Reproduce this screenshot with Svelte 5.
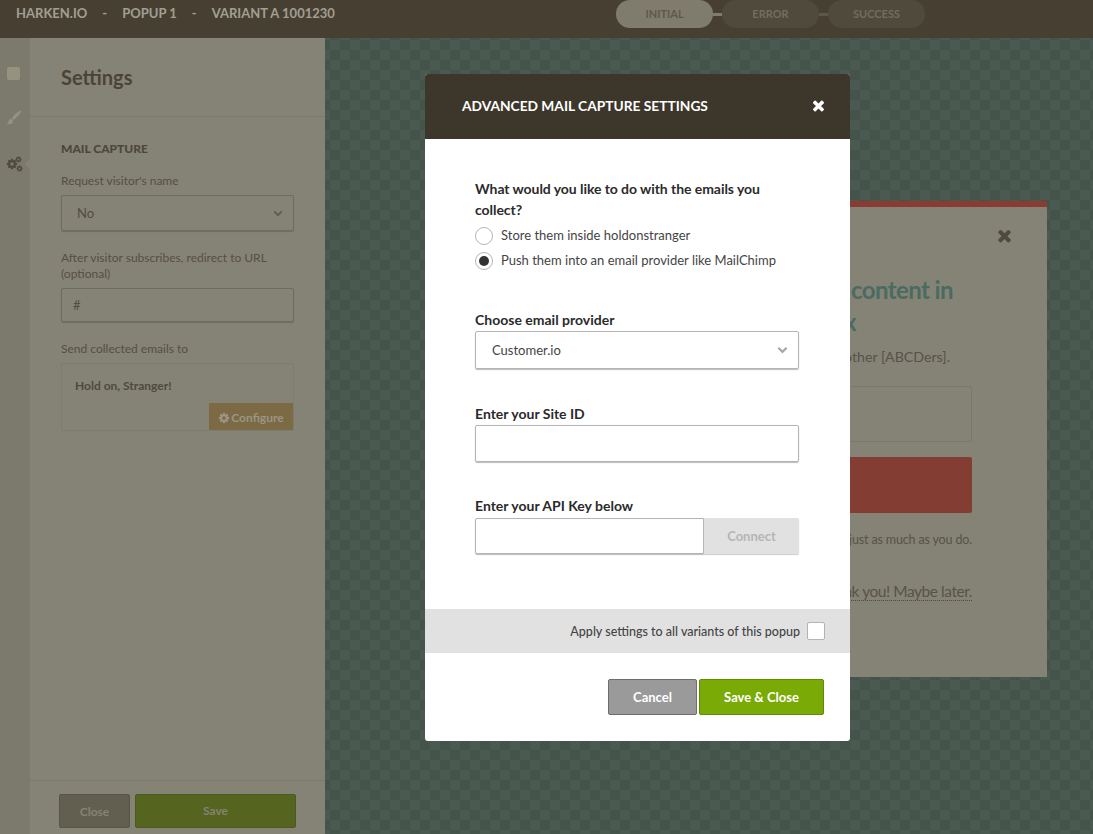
<script>
  const cog = "M1152 896q0-106-75-181t-181-75-181 75-75 181 75 181 181 75 181-75 75-181zm512-109v222q0 12-8 23t-20 13l-185 28q-19 54-39 91 35 50 107 138 10 12 10 25t-9 23q-27 37-99 108t-94 71q-12 0-26-9l-138-108q-44 23-91 38-16 136-29 186-7 28-36 28h-222q-14 0-24.5-8.5t-11.5-21.5l-28-184q-49-16-90-37l-141 107q-10 9-25 9-14 0-25-11-126-114-165-168-7-10-7-23 0-12 8-23 15-21 51-66.5t54-70.5q-27-50-41-99l-183-27q-13-2-21-12.5t-8-23.5v-222q0-12 8-23t19-13l186-28q14-46 39-92-40-57-107-138-10-12-10-24 0-10 9-23 26-36 98.5-107.5t94.5-71.5q13 0 26 10l138 107q44-23 91-38 16-136 29-186 7-28 36-28h222q14 0 24.5 8.5t11.5 21.5l28 184q49 16 90 37l142-107q9-9 24-9 13 0 25 10 129 119 165 170 7 8 7 22 0 12-8 23-15 21-51 66.5t-54 70.5q26 50 41 98l183 28q13 2 21 12.5t8 23.5z";
  const times = "M1298 1322q0 40-28 68l-136 136q-28 28-68 28t-68-28l-294-294-294 294q-28 28-68 28t-68-28l-136-136q-28-28-28-68t28-68l294-294-294-294q-28-28-28-68t28-68l136-136q28-28 68-28t68 28l294 294 294-294q28-28 68-28t68 28l136 136q28 28 28 68t-28 68l-294 294 294 294q28 28 28 68z";
</script>

<div class="shell">
  <header class="topbar">
    <div class="crumbs"><span>HARKEN.IO</span><span>-</span><span>POPUP 1</span><span>-</span><span>VARIANT A 1001230</span></div>
    <nav class="steps">
      <div class="step active">INITIAL</div>
      <i class="link"></i>
      <div class="step">ERROR</div>
      <i class="link"></i>
      <div class="step">SUCCESS</div>
    </nav>
  </header>

  <div class="main">
    <aside class="rail">
      <span class="rail-square"></span>
      <svg class="rail-brush" viewBox="0 0 16 16" width="16" height="16"><path d="M15.500.5c.3.3-.8 2.400-3 4.800S8.400 9.300 7.600 9.700L6 8.300c.5-1 2.200-3.300 4.500-5.300S15.200.2 15.500.5zM5.300 9c1.400.2 2 1.300 1.800 2.600-.3 2-2.700 3.300-6.600 2.500 1.300-.7 1.600-1.300 1.900-2.500C2.700 10.100 3.800 8.800 5.300 9z" fill="#95937f"/></svg>
      <span class="rail-gears">
        <svg class="g1" viewBox="0 0 1792 1792" width="12" height="12"><path d={cog} fill="#4f4a3d"/></svg>
        <svg class="g2" viewBox="0 0 1792 1792" width="7" height="7"><path d={cog} fill="#4f4a3d"/></svg>
        <svg class="g3" viewBox="0 0 1792 1792" width="7" height="7"><path d={cog} fill="#4f4a3d"/></svg>
      </span>
      <span class="rail-caret"></span>
    </aside>

    <section class="panel">
      <h1>Settings</h1>
      <div class="panel-body">
        <h2>MAIL CAPTURE</h2>
        <p class="lab first">Request visitor's name</p>
        <div class="field sel">No
          <svg viewBox="0 0 12 8" width="10" height="7"><path d="M1.500 1.500 6 6l4.500-4.500" fill="none" stroke="#5e5b4e" stroke-width="2.200"/></svg>
        </div>
        <p class="lab after">After visitor subscribes, redirect to URL (optional)</p>
        <div class="field url">#</div>
        <p class="lab send">Send collected emails to</p>
        <div class="dest">
          <strong>Hold on, Stranger!</strong>
          <div class="cfg"><svg viewBox="0 0 1792 1792" width="12" height="12"><path d={cog} fill="#9a9584"/></svg>Configure</div>
        </div>
      </div>
      <footer class="panel-foot">
        <div class="pbtn close">Close</div>
        <div class="pbtn save">Save</div>
      </footer>
    </section>

    <section class="canvas">
      <div class="popup">
        <svg class="popup-x" viewBox="0 0 1408 1792" width="15" height="19"><path d={times} fill="#4f4a3f"/></svg>
        <div class="pop-title one">content in</div>
        <div class="pop-title two">inbox</div>
        <div class="pop-sub">every other [ABCDers].</div>
        <div class="pop-input"></div>
        <div class="pop-cta"></div>
        <div class="pop-note">just as much as you do.</div>
        <div class="pop-later"><span>No thank you! Maybe later.</span></div>
      </div>

      <div class="modal">
        <div class="m-head">
          <span>ADVANCED MAIL CAPTURE SETTINGS</span>
          <svg viewBox="0 0 1408 1792" width="13" height="17"><path d={times} fill="#fff"/></svg>
        </div>
        <div class="m-body">
          <p class="q question">What would you like to do with the emails you collect?</p>
          <div class="radio"><span class="dot"></span><span class="rl">Store them inside holdonstranger</span></div>
          <div class="radio"><span class="dot on"></span><span class="rl">Push them into an email provider like MailChimp</span></div>
          <p class="q provider">Choose email provider</p>
          <div class="m-field m-sel">Customer.io
            <svg viewBox="0 0 12 8" width="11" height="8"><path d="M1.500 1.500 6 6l4.500-4.500" fill="none" stroke="#a8a89c" stroke-width="2.400"/></svg>
          </div>
          <p class="q site">Enter your Site ID</p>
          <div class="m-field"></div>
          <p class="q api">Enter your API Key below</p>
          <div class="api-row">
            <div class="m-field api-input"></div>
            <div class="connect">Connect</div>
          </div>
        </div>
        <div class="band">Apply settings to all variants of this popup <span class="check"></span></div>
        <div class="m-foot">
          <div class="mbtn cancel">Cancel</div>
          <div class="mbtn saveclose">Save &amp; Close</div>
        </div>
      </div>
    </section>
  </div>
</div>

<style>
  :global(body) { margin: 0; font-family: Lato, "Liberation Sans", sans-serif; }
  p, h1, h2 { margin: 0; }
  .shell { width: 1093px; height: 834px; display: flex; flex-direction: column; overflow: hidden; }

  .topbar { height: 38px; flex: none; background: #483f33; display: flex; position: relative; }
  .crumbs { display: flex; gap: 15px; padding: 6px 0 0 16px; font-size: 13px; line-height: 15px; font-weight: 700; color: #a19f91; height: 20px; width: 616px; box-sizing: border-box; }
  .steps { display: flex; align-items: center; height: 28px; }
  .step { width: 97px; height: 28px; border-radius: 14px; background: #4f4a3b; color: #726e5e; font-size: 11px; font-weight: 700; text-align: center; line-height: 28px; }
  .step.active { background: #7f7c6e; color: #5f5849; }
  .link { width: 9px; height: 3px; background: #5c5747; }
  .step.active + .link { background: #7f7c6e; }

  .main { flex: 1; display: flex; min-height: 0; }
  .rail { width: 30px; flex: none; background: #7c7a6c; position: relative; display: flex; flex-direction: column; align-items: center; }
  .rail-square { width: 13px; height: 13px; border-radius: 2px; background: #95937f; margin: 29px 0 0 -3px; }
  .rail-brush { margin: 30px 0 0 -2px; }
  .rail-gears { position: relative; width: 16px; height: 16px; margin: 30px 0 0 -3px; }
  .rail-gears svg { position: absolute; }
  .g1 { left: 0; top: 2px; }
  .g2 { left: 9px; top: 0; }
  .g3 { left: 10px; top: 9px; }
  .rail-caret { position: absolute; right: 0; top: 121px; border: 5px solid transparent; border-right-color: #858375; border-left-width: 0; }

  .panel { width: 295px; flex: none; background: #858375; color: #4d473b; display: flex; flex-direction: column; }
  h1 { font-size: 20px; line-height: 24px; font-weight: 700; padding: 27px 0 27px 31px; border-bottom: 1px solid #7b7a6b; color: #4a4438; }
  .panel-body { padding: 24px 31px 0; }
  h2 { font-size: 12px; line-height: 16px; font-weight: 900; color: #4d473b; }
  .lab { font-size: 12px; line-height: 16px; color: #564f42; }
  .lab.first { margin-top: 16px; }
  .lab.after { margin-top: 19px; }
  .lab.send { margin-top: 19px; }
  .field { box-sizing: border-box; width: 233px; border: 1px solid #6e6c5f; border-radius: 2px; box-shadow: 0 1px 1px #6f6d60; font-size: 13px; color: #534d40; display: flex; align-items: center; justify-content: space-between; }
  .sel { height: 36px; margin-top: 6px; padding: 0 10px 0 15px; }
  .url { height: 34px; margin-top: 6px; padding: 0 11px; }
  .dest { box-sizing: border-box; width: 233px; height: 68px; margin-top: 6px; border: 1px solid #7e7c6e; border-radius: 2px; position: relative; font-size: 12px; line-height: 16px; padding: 14px 13px; color: #4f4a3d; }
  .cfg { position: absolute; right: 0; bottom: 0; width: 84px; height: 27px; background: #7b6a44; color: #9a9584; font-weight: 700; font-size: 12px; display: flex; align-items: center; justify-content: center; gap: 1px; padding-top: 2px; box-sizing: border-box; }

  .panel-foot { margin-top: auto; height: 54px; box-sizing: border-box; border-top: 1px solid #7b7a6b; padding: 13px 29px 0; display: flex; gap: 5px; }
  .pbtn { box-sizing: border-box; height: 34px; border-radius: 2px; font-size: 12px; font-weight: 700; color: #858375; display: flex; align-items: center; justify-content: center; }
  .close { width: 71px; background: #625f51; border: 1px solid #565347; }
  .save { width: 161px; background: #55651f; border: 1px solid #4c5a1c; padding-bottom: 2px; }

  .canvas { flex: 1; position: relative; background-color: #4a5a52; background-image: conic-gradient(#45544b 25%, transparent 0 50%, #45544b 0 75%, transparent 0); background-size: 20px 20px; background-position: 5px 2px; }

  .popup { position: absolute; left: 115px; top: 163px; width: 607px; height: 476px; box-sizing: border-box; background: #858375; border-top: 6px solid #8a3b33; border-radius: 2px 2px 0 0; color: #58524a; padding-right: 75px; text-align: right; white-space: nowrap; }
  .popup-x { position: absolute; right: 35px; top: 19px; }
  .pop-title { font-size: 24px; line-height: 32px; font-weight: 700; color: #4a6b62; letter-spacing: -0.600px; }
  .pop-title.one { margin: 67px 19px 0 0; }
  .pop-title.two { margin: 0 116px 0 0; }
  .pop-sub { font-size: 14.200px; line-height: 20px; margin: 9px 22px 0 0; }
  .pop-input { height: 56px; border: 1px solid #7a7868; border-radius: 2px; box-sizing: border-box; margin-top: 19px; }
  .pop-cta { height: 56px; background: #843d33; border-radius: 2px; margin-top: 15px; }
  .pop-note { font-size: 12.500px; line-height: 18px; margin-top: 18px; letter-spacing: -0.150px; }
  .pop-later { font-size: 15.500px; line-height: 20px; margin-top: 32px; letter-spacing: -0.450px; }
  .pop-later span { border-bottom: 1px dotted #4f4a3f; display: inline-block; line-height: 18px; }

  .modal { position: absolute; left: 100px; top: 36px; width: 425px; height: 667px; background: #fff; border-radius: 3px; overflow: hidden; color: #222; }
  .m-head { height: 65px; background: #3c372a; color: #fff; display: flex; align-items: center; justify-content: space-between; padding: 0 25px 2px 37px; box-sizing: border-box; font-size: 13.750px; font-weight: 700; }
  .m-body { height: 470px; box-sizing: border-box; padding: 39px 51px 0 50px; }
  .q { font-size: 14px; line-height: 21px; font-weight: 700; color: #2b2b2b; }
  .question { letter-spacing: -0.060px; }
  .radio { display: flex; align-items: center; gap: 8px; height: 25px; font-size: 13px; color: #444; }
  .rl { margin-bottom: 2px; }
  .q + .radio { margin-top: 3px; }
  .dot { width: 18px; height: 18px; box-sizing: border-box; border: 1px solid #b4b4b4; border-radius: 50%; display: flex; align-items: center; justify-content: center; }
  .dot.on::after { content: ""; width: 10px; height: 10px; border-radius: 50%; background: #333; }
  .provider { margin-top: 37px; line-height: 20px; }
  .m-field { box-sizing: border-box; height: 37px; border: 1px solid #b4b4b4; border-radius: 2px; box-shadow: 0 1px 1px #bbb; font-size: 13px; color: #444; display: flex; align-items: center; justify-content: space-between; }
  .m-sel { height: 38px; margin-top: 1px; padding: 0 10px 0 16px; }
  .site { margin-top: 35px; line-height: 20px; }
  .site + .m-field { margin-top: 1px; }
  .api { margin-top: 34px; line-height: 20px; }
  .api-row { display: flex; margin-top: 2px; height: 36px; }
  .api-input { width: 229px; height: 36px; border-radius: 2px 0 0 2px; }
  .connect { width: 95px; background: #e1e1e1; color: #b5b5b5; font-size: 13px; font-weight: 700; display: flex; align-items: center; justify-content: center; border-radius: 0 2px 2px 0; box-shadow: 0 1px 1px #ccc; }
  .band { height: 44px; background: #e1e1e1; display: flex; align-items: center; justify-content: flex-end; gap: 7px; padding-right: 25px; font-size: 12.500px; font-weight: 500; color: #444; }
  .check { width: 18px; height: 18px; box-sizing: border-box; background: #fff; border: 1px solid #b4b4b4; border-radius: 2px; }
  .m-foot { display: flex; justify-content: flex-end; gap: 2px; padding: 26px 26px 0 0; }
  .mbtn { box-sizing: border-box; height: 36px; border-radius: 2px; color: #fff; font-size: 13px; font-weight: 700; display: flex; align-items: center; justify-content: center; }
  .cancel { width: 89px; background: #9a9a9a; border: 1px solid #6d6d6d; }
  .saveclose { width: 125px; background: #7aaa06; border: 1px solid #5e8a05; }
</style>
